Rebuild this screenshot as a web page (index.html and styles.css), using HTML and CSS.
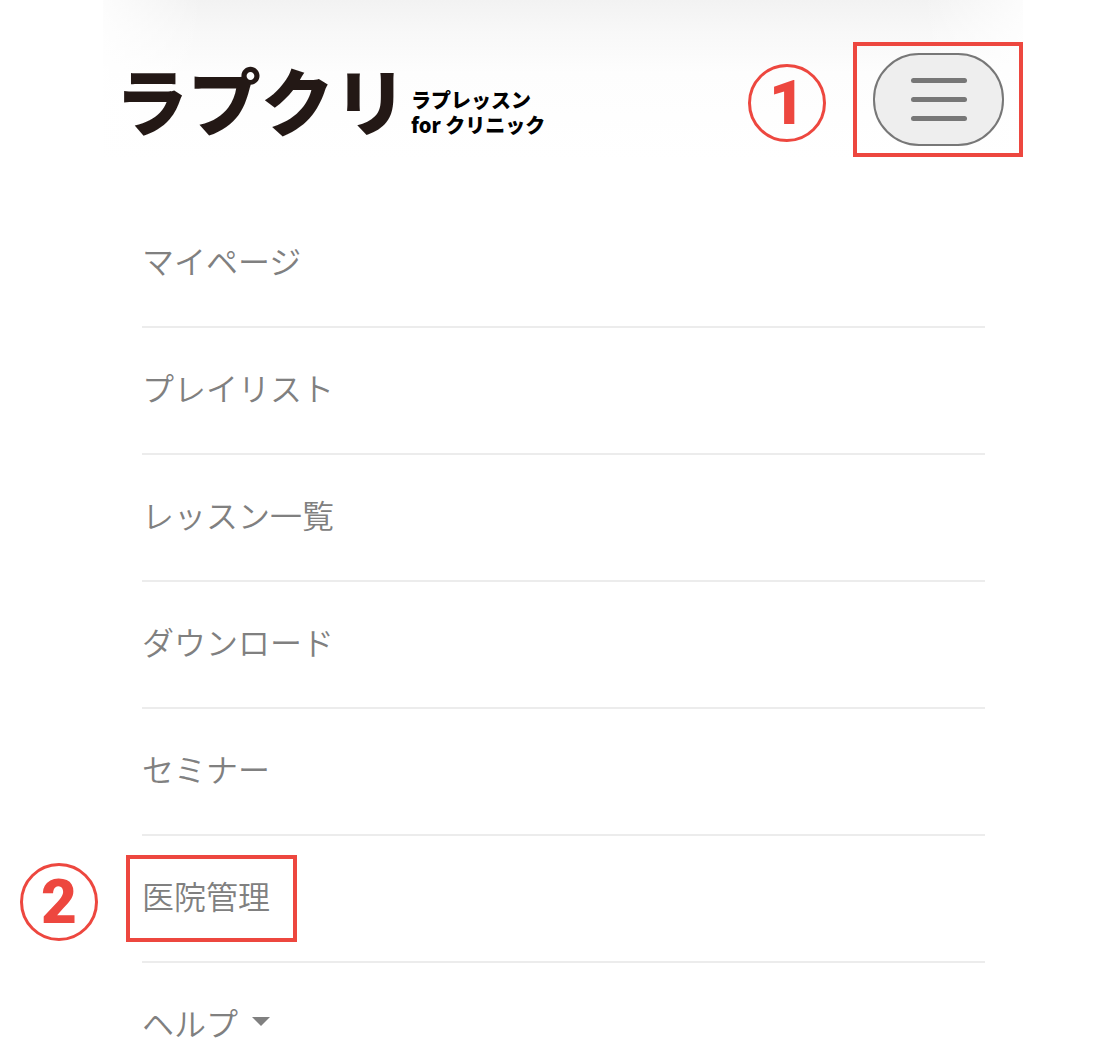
FILE: index.html
```html
<!DOCTYPE html>
<html lang="ja">
<head>
  <meta charset="utf-8">
  <title>ラプクリ</title>
  <link rel="stylesheet" href="styles.css">
</head>
<body>
  <div class="screen">
    <!-- HEADER -->
    <header class="header">
      <a class="logo" href="#">
        <span class="logo-name">ラプクリ</span>
        <span class="logo-sub">ラプレッスン<br>for クリニック</span>
      </a>
      <div class="step">
        <span class="step-number">1</span>
        <div class="step-frame">
          <button class="menu-button" type="button" aria-label="メニュー">
            <span class="menu-bar"></span>
            <span class="menu-bar"></span>
            <span class="menu-bar"></span>
          </button>
        </div>
      </div>
    </header>

    <!-- MENU -->
    <nav>
      <ul class="menu">
        <li><a href="#">マイページ</a></li>
        <li><a href="#">プレイリスト</a></li>
        <li><a href="#">レッスン一覧</a></li>
        <li><a href="#">ダウンロード</a></li>
        <li><a href="#">セミナー</a></li>
        <li class="marked">
          <span class="step-number">2</span>
          <a href="#">医院管理</a>
        </li>
        <li><a href="#">ヘルプ<span class="caret"></span></a></li>
      </ul>
    </nav>
  </div>
</body>
</html>
```
FILE: styles.css
```css
*, *::before, *::after { box-sizing: border-box; }
body {
  margin: 0;
  padding: 0 73px 0 103px;
  background: #fff;
  color: #808080;
  font-family: "Noto Sans CJK JP", sans-serif;
  overflow-x: hidden;
}
.screen { position: relative; }

.screen::before {
  content: "";
  position: absolute;
  top: 0;
  left: 0;
  right: 0;
  height: 160px;
  background:
    linear-gradient(to right, rgba(255, 255, 255, 0.8), transparent 100px, transparent calc(100% - 100px), rgba(255, 255, 255, 0.8)),
    linear-gradient(#f2f2f2, #f8f8f8 32px, #fdfdfd 72px, #fff);
  z-index: -1;
}

.header {
  display: flex;
  justify-content: space-between;
  align-items: flex-start;
  padding: 42px 0 0 12px;
}
.logo {
  display: flex;
  gap: 4px;
  margin-top: 14px;
  text-decoration: none;
  white-space: nowrap;
}
.logo-name {
  color: #231815;
  font-size: 73px;
  font-weight: 900;
  line-height: 84px;
}
.logo-sub {
  margin-top: 31px;
  color: #000;
  font-size: 20px;
  font-weight: 900;
  line-height: 25px;
}

/* Numbered callouts */
.step {
  display: flex;
  align-items: flex-start;
  gap: 27px;
}
.step-number {
  display: flex;
  justify-content: center;
  align-items: center;
  width: 78px;
  height: 78px;
  border: 3px solid #ed473f;
  border-radius: 50%;
  color: #ed473f;
  font-family: Roboto, sans-serif;
  font-size: 62px;
  font-weight: 900;
  line-height: 72px;
}
.step .step-number { margin-top: 22px; }
.step-frame {
  padding: 7px 15px 7px 16px;
  border: 4px solid #ed473f;
}
.menu-button {
  display: flex;
  flex-direction: column;
  justify-content: center;
  align-items: center;
  gap: 14px;
  width: 131px;
  height: 93px;
  padding: 0;
  border: 2px solid #777;
  border-radius: 46px;
  background: #eee;
  cursor: pointer;
}
.menu-bar {
  width: 56px;
  height: 5px;
  border-radius: 3px;
  background: #777;
}

.menu {
  margin: 44px 38px 0 39px;
  padding: 0;
  list-style: none;
}
.menu li { border-bottom: 2px solid #ececec; }
.menu li:last-child { border-bottom: none; }
.menu a {
  display: flex;
  align-items: center;
  height: 125px;
  padding-bottom: 8px;
  color: inherit;
  font-size: 32px;
  font-weight: 350;
  text-decoration: none;
}
.caret {
  margin-left: 14px;
  border: 9px solid transparent;
  border-top-color: #808080;
  border-bottom: none;
}
.marked { position: relative; }
.marked::after {
  content: "";
  position: absolute;
  top: 19px;
  left: -16px;
  width: 171px;
  height: 87px;
  border: 4px solid #ed473f;
  pointer-events: none;
}
.marked .step-number {
  position: absolute;
  top: 27px;
  left: -122px;
}
```
